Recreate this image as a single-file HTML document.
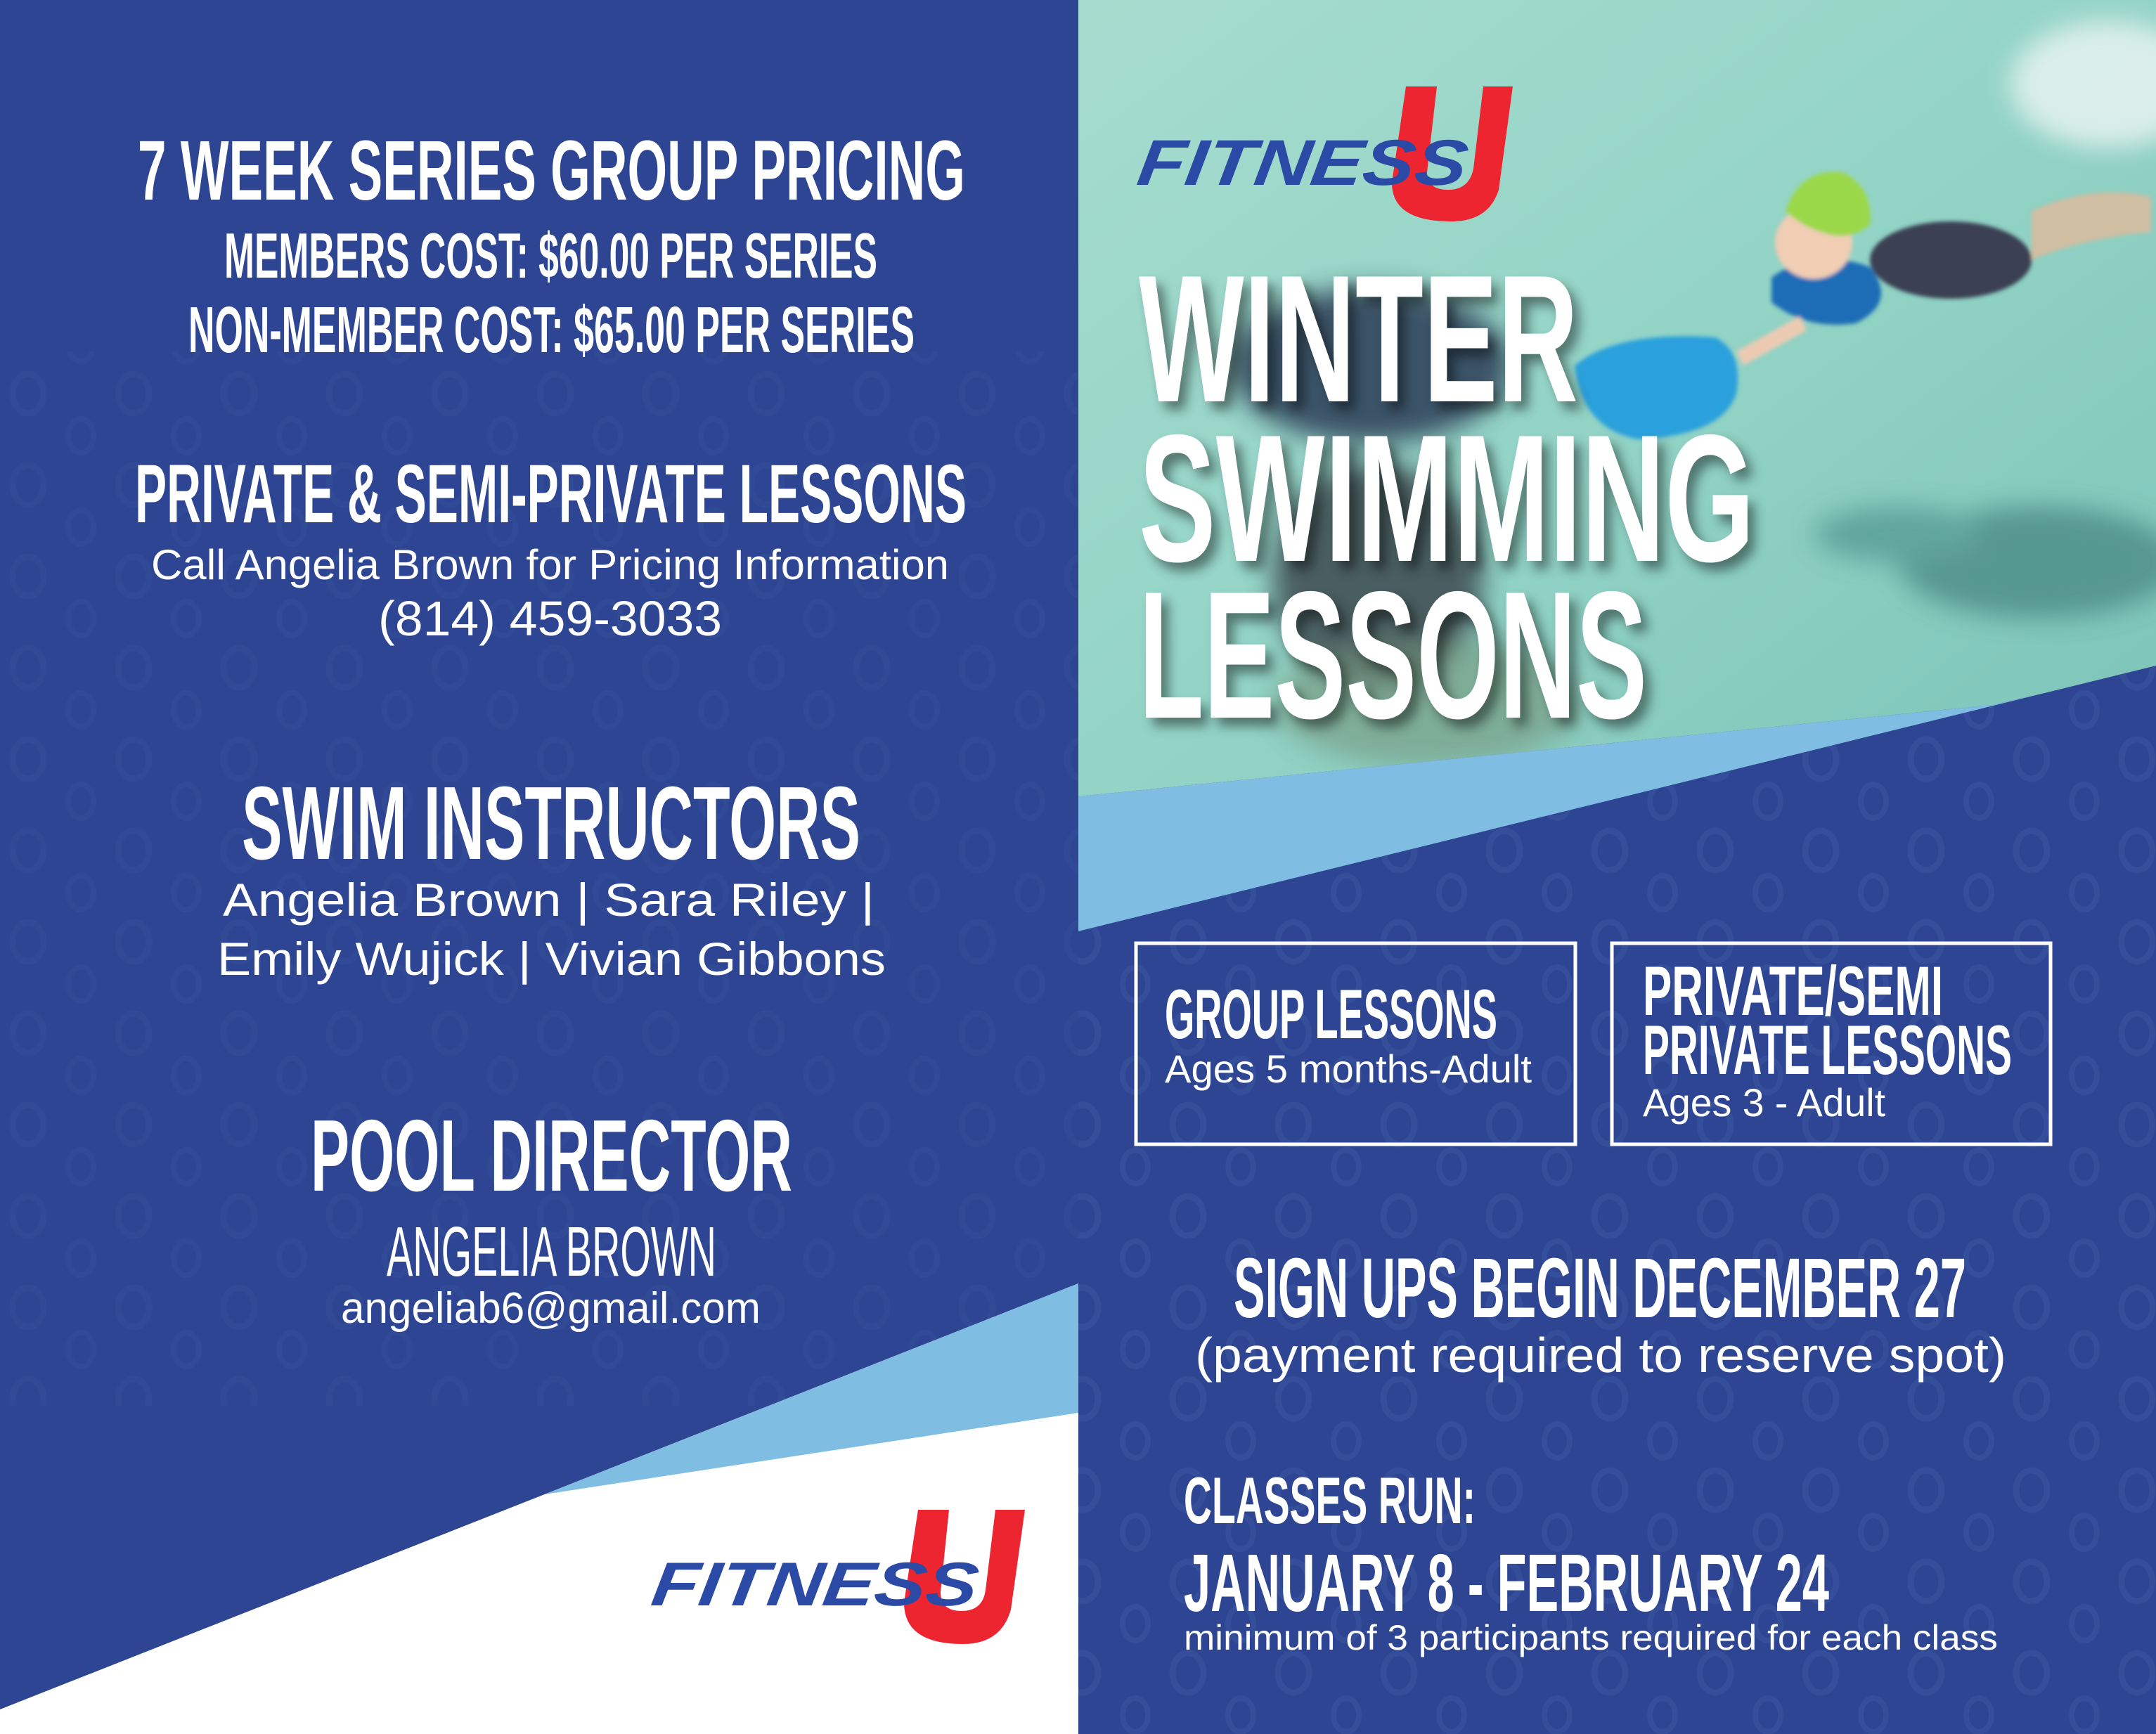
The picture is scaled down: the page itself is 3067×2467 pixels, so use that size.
<!DOCTYPE html>
<html><head><meta charset="utf-8"><style>
html,body{margin:0;padding:0;background:#2d4592;}
svg{display:block}
.b{font-family:"Liberation Sans",sans-serif;font-weight:bold;fill:#fff}
.r{font-family:"Liberation Sans",sans-serif;font-weight:normal;fill:#fff}
.n{font-family:"Liberation Sans Narrow","Liberation Sans",sans-serif;font-weight:normal;fill:#fff}
</style></head><body>
<svg width="3067" height="2467" viewBox="0 0 3067 2467" xmlns="http://www.w3.org/2000/svg">
<defs>
<linearGradient id="water" x1="0" y1="0" x2="1" y2="1">
<stop offset="0" stop-color="#a6dccf"/><stop offset="0.5" stop-color="#93d4c6"/><stop offset="1" stop-color="#7cc3b8"/>
</linearGradient>
<filter id="bl" x="-20%" y="-20%" width="140%" height="140%"><feGaussianBlur stdDeviation="18"/></filter>
<filter id="bl2"><feGaussianBlur stdDeviation="3"/></filter>
<filter id="sh" x="-5%" y="-5%" width="115%" height="120%"><feDropShadow dx="10" dy="12" stdDeviation="8" flood-color="#000" flood-opacity="0.45"/></filter>
<pattern id="rings" width="150" height="130" patternUnits="userSpaceOnUse">
<ellipse cx="40" cy="40" rx="22" ry="28" fill="none" stroke="#4562a8" stroke-width="9"/>
<ellipse cx="115" cy="100" rx="18" ry="24" fill="none" stroke="#4562a8" stroke-width="8"/>
</pattern>
</defs>
<rect width="3067" height="2467" fill="#2d4592"/>
<rect x="0" y="500" width="1534" height="1500" fill="url(#rings)" opacity="0.18"/>
<rect x="1534" y="950" width="1533" height="1500" fill="url(#rings)" opacity="0.3"/>

<!-- photo -->
<g>
<clipPath id="pc"><polygon points="1534,0 3067,0 3067,950 2834,1003 1534,1133"/></clipPath>
<g clip-path="url(#pc)">
<rect x="1534" y="0" width="1533" height="1140" fill="url(#water)"/>
<g filter="url(#bl)" opacity="0.85">
<ellipse cx="1950" cy="520" rx="200" ry="110" fill="#2b3a55"/>
<ellipse cx="1960" cy="820" rx="150" ry="160" fill="#3d4a50"/>
<ellipse cx="2030" cy="1000" rx="220" ry="90" fill="#6f8a6e" opacity="0.6"/>
<ellipse cx="2900" cy="800" rx="200" ry="80" fill="#4d8f89"/>
<ellipse cx="2700" cy="760" rx="120" ry="40" fill="#5a9e98"/>
<ellipse cx="3000" cy="120" rx="140" ry="90" fill="#e8f3f0"/>
</g>
<g filter="url(#bl2)">
<path d="M2240 520 Q2300 470 2440 480 Q2480 500 2470 560 Q2450 620 2330 625 Q2250 610 2240 520Z" fill="#2aa0dc"/>
<ellipse cx="2775" cy="370" rx="115" ry="55" fill="#3b3f52"/>
<path d="M2890 300 Q2980 260 3060 280 L3060 330 Q2960 340 2890 370Z" fill="#e0b99a" opacity="0.8"/>
<path d="M2520 395 Q2580 350 2660 380 Q2700 430 2640 460 Q2570 470 2520 430Z" fill="#1a6db5"/>
<ellipse cx="2580" cy="345" rx="55" ry="52" fill="#f0cdb3"/>
<path d="M2540 300 Q2560 240 2620 245 Q2665 265 2660 320 Q2630 345 2590 330 Q2560 320 2540 300Z" fill="#9bd84a"/>
<path d="M2470 500 L2560 450 L2570 470 L2480 520Z" fill="#eccab2"/>
</g>
</g>
<polygon points="1534,1133 2834,1003 3067,950 3067,947 1534,1325" fill="#7fbde3"/>
<polygon points="1534,1325 3067,947 3067,2467 1534,2467" fill="#2d4592"/>
<polygon points="1534,1325 3067,947 3067,2467 1534,2467" fill="url(#rings)" opacity="0.3"/>
</g>

<!-- top logo -->
<path d="M2000 123 L2044 123 L2030 245 Q2030 270 2060 270 Q2090 270 2096 240 L2110 123 L2152 123 L2132 270 Q2118 315 2064 315 Q1980 315 1980 260 Z" fill="#ed2530"/>
<text x="1615" y="263" class="b" style="fill:#2a4aa6;font-style:italic" font-size="92" textLength="468" lengthAdjust="spacingAndGlyphs" transform="skewX(-8) translate(37,0)">FITNESS</text>

<!-- title -->
<g filter="url(#sh)">
<text x="1620" y="571" class="b" font-size="258" textLength="625" lengthAdjust="spacingAndGlyphs">WINTER</text>
<text x="1620" y="798" class="b" font-size="258" textLength="876" lengthAdjust="spacingAndGlyphs">SWIMMING</text>
<text x="1620" y="1021" class="b" font-size="258" textLength="723" lengthAdjust="spacingAndGlyphs">LESSONS</text>
</g>

<!-- left column -->
<text x="196" y="284" class="b" font-size="121" textLength="1177" lengthAdjust="spacingAndGlyphs">7 WEEK SERIES GROUP PRICING</text>
<text x="319" y="395" class="b" font-size="91" textLength="929" lengthAdjust="spacingAndGlyphs">MEMBERS COST: $60.00 PER SERIES</text>
<text x="268" y="501" class="b" font-size="93" textLength="1033" lengthAdjust="spacingAndGlyphs">NON-MEMBER COST: $65.00 PER SERIES</text>
<text x="192" y="743" class="b" font-size="118" textLength="1183" lengthAdjust="spacingAndGlyphs">PRIVATE &amp; SEMI-PRIVATE LESSONS</text>
<text x="215" y="824" class="r" font-size="60" textLength="1135" lengthAdjust="spacingAndGlyphs">Call Angelia Brown for Pricing Information</text>
<text x="538" y="904" class="r" font-size="70" textLength="489" lengthAdjust="spacingAndGlyphs">(814) 459-3033</text>
<text x="344" y="1222" class="b" font-size="148" textLength="880" lengthAdjust="spacingAndGlyphs">SWIM INSTRUCTORS</text>
<text x="317" y="1303" class="r" font-size="66" textLength="927" lengthAdjust="spacingAndGlyphs">Angelia Brown  |  Sara Riley |</text>
<text x="309" y="1387" class="r" font-size="66" textLength="951" lengthAdjust="spacingAndGlyphs">Emily Wujick | Vivian Gibbons</text>
<text x="442" y="1694" class="b" font-size="145" textLength="685" lengthAdjust="spacingAndGlyphs">POOL DIRECTOR</text>
<text x="550" y="1815" class="n" font-size="100" textLength="469" lengthAdjust="spacingAndGlyphs">ANGELIA BROWN</text>
<text x="485" y="1882" class="r" font-size="62" textLength="597" lengthAdjust="spacingAndGlyphs">angeliab6@gmail.com</text>

<!-- left bottom shapes -->
<polygon points="1534,1826 1534,2467 0,2467 0,2432" fill="#ffffff"/>
<polygon points="1534,1826 1534,2010 775,2126" fill="#7fbde3"/>
<!-- bottom logo -->
<path d="M1306 2148 L1350 2148 L1338 2265 Q1338 2292 1368 2292 Q1398 2292 1402 2262 L1416 2148 L1458 2148 L1438 2290 Q1424 2339 1370 2339 Q1286 2339 1286 2280 Z" fill="#ed2530"/>
<text x="925" y="2284" class="b" style="fill:#2a4aa6;font-style:italic" font-size="88" textLength="463" lengthAdjust="spacingAndGlyphs" transform="skewX(-8) translate(320,0)">FITNESS</text>

<!-- right boxes -->
<rect x="1616" y="1342" width="625" height="286" fill="none" stroke="#fff" stroke-width="5"/>
<rect x="2293" y="1342" width="624" height="286" fill="none" stroke="#fff" stroke-width="5"/>
<text x="1657" y="1477" class="b" font-size="99" textLength="473" lengthAdjust="spacingAndGlyphs">GROUP LESSONS</text>
<text x="1657" y="1540" class="r" font-size="56" textLength="522" lengthAdjust="spacingAndGlyphs">Ages 5 months-Adult</text>
<text x="2337" y="1444" class="b" font-size="99" textLength="427" lengthAdjust="spacingAndGlyphs">PRIVATE/SEMI</text>
<text x="2337" y="1528" class="b" font-size="99" textLength="525" lengthAdjust="spacingAndGlyphs">PRIVATE LESSONS</text>
<text x="2337" y="1588" class="r" font-size="56" textLength="345" lengthAdjust="spacingAndGlyphs">Ages 3 - Adult</text>

<text x="1755" y="1874" class="b" font-size="121" textLength="1042" lengthAdjust="spacingAndGlyphs">SIGN UPS BEGIN DECEMBER 27</text>
<text x="1700" y="1952" class="r" font-size="70" textLength="1154" lengthAdjust="spacingAndGlyphs">(payment required to reserve spot)</text>
<text x="1684" y="2167" class="b" font-size="94" textLength="415" lengthAdjust="spacingAndGlyphs">CLASSES RUN:</text>
<text x="1684" y="2292" class="b" font-size="116" textLength="918" lengthAdjust="spacingAndGlyphs">JANUARY 8 - FEBRUARY 24</text>
<text x="1684" y="2347" class="r" font-size="50" textLength="1158" lengthAdjust="spacingAndGlyphs">minimum of 3 participants required for each class</text>
</svg>
</body></html>
